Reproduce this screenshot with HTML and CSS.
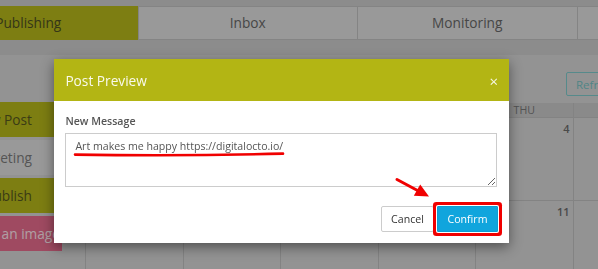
FILE: index.html
```html
<!DOCTYPE html>
<html lang="en">
<head>
<meta charset="utf-8">
<title>Publishing</title>
<link rel="stylesheet" href="styles.css">
</head>
<body>
  <div class="topstrip"></div>
  <nav class="tabs">
    <div class="tab active">Publishing</div>
    <div class="tab">Inbox</div>
    <div class="tab">Monitoring</div>
    <div class="tab">Reports</div>
  </nav>
  <main class="main">
    <aside class="sidebar">
      <div class="side-btn olive">New Post</div>
      <div class="side-btn gray">Retargeting</div>
      <div class="side-btn olive spaced">Publish</div>
      <div class="side-btn pink">Add an image</div>
    </aside>
    <section class="cal-wrap">
      <div class="toolbar"><button class="refresh">Refresh</button></div>
      <div class="calendar">
        <div class="head">SUN</div><div class="head">MON</div><div class="head">TUE</div><div class="head">WED</div><div class="head">THU</div><div class="head">FRI</div>
        <div class="day">31</div><div class="day">1</div><div class="day">2</div><div class="day">3</div><div class="day">4</div><div class="day">5</div>
        <div class="day">7</div><div class="day">8</div><div class="day">9</div><div class="day">10</div><div class="day">11</div><div class="day">12</div>
      </div>
    </section>
  </main>

  <div class="backdrop"></div>

  <div class="modal">
    <div class="modal-header">
      <span class="modal-title">Post Preview</span>
      <span class="close">&times;</span>
    </div>
    <div class="modal-body">
      <label class="label" for="msg">New Message</label>
      <textarea id="msg" class="msg">Art makes me happy https://digitalocto.io/</textarea>
    </div>
    <div class="modal-footer">
      <button class="btn cancel">Cancel</button>
      <button class="btn confirm">Confirm</button>
    </div>
  </div>

  <svg class="annot" width="598" height="269" viewBox="0 0 598 269">
    <path d="M75 154.6 Q180 156.4 283 153.6" fill="none" stroke="#f00000" stroke-width="2.6" stroke-linecap="round"/>
    <path d="M397 179.5 L418 190.8" fill="none" stroke="#f00000" stroke-width="3" stroke-linecap="round"/>
    <polygon points="429,196.6 413.8,195.8 420.2,184.6" fill="#f00000"/>
  </svg>
</body>
</html>
```
FILE: styles.css
```css
* { box-sizing: border-box; }

html, body {
  margin: 0;
  padding: 0;
  width: 598px;
  height: 269px;
  overflow: hidden;
}

body {
  background: #c9c9c9;
  font-family: "Open Sans", "Noto Sans", sans-serif;
  color: #555;
  position: relative;
}

.topstrip { height: 6px; }

.tabs {
  display: flex;
  height: 34px;
  margin-left: -82px;
  margin-bottom: 15px;
}

.tab {
  flex: 0 0 219.5px;
  height: 34px;
  line-height: 32px;
  text-align: center;
  font-size: 13.7px;
  color: #666;
  background: #dbdbdb;
  border-top: 1px solid #bdbdbd;
  border-bottom: 1px solid #bdbdbd;
  border-left: 1px solid #bdbdbd;
}

.tab.active {
  background: #b3b51a;
  border-color: #b3b51a;
  color: #4d4e22;
}

.main {
  display: flex;
  background: #d3d3d3;
  height: 214px;
}

.sidebar {
  flex: 0 0 85px;
  padding-top: 47px;
}

.side-btn {
  width: 124px;
  margin-left: -70px;
  height: 35px;
  line-height: 35px;
  text-align: right;
  padding-right: 22px;
  font-size: 13.7px;
  margin-bottom: 3px;
  white-space: nowrap;
  overflow: hidden;
}

.side-btn.olive { background: #b3b51a; color: #55561f; }
.side-btn.gray { background: #dcdcdc; color: #7a7a7a; }
.side-btn.spaced { margin-top: 2px; margin-bottom: 3px; }
.side-btn.pink {
  width: 132px;
  padding-right: 2px;
  background: #e46a8c;
  color: #fbe4ea;
}

.cal-wrap {
  flex: 1;
  min-width: 0;
}

.toolbar {
  height: 48px;
  padding-top: 17px;
  display: flex;
  justify-content: flex-end;
}

.refresh {
  width: 72px;
  height: 24px;
  margin-right: -40px;
  padding: 0 0 0 9px;
  text-align: left;
  background: transparent;
  border: 1px solid #7cc6c8;
  border-radius: 2px;
  color: #74bfc1;
  font-family: "Open Sans", sans-serif;
  font-size: 11.5px;
}

.calendar {
  display: grid;
  grid-template-columns: repeat(6, 97.5px);
  grid-template-rows: 15px 83px 83px;
}

.head {
  background: #c6c6c6;
  border-left: 1px solid #bcbcbc;
  border-bottom: 1px solid #bcbcbc;
  font-size: 10.6px;
  line-height: 14px;
  text-align: center;
  color: #777;
}

.day {
  border-left: 1px solid #bcbcbc;
  border-bottom: 1px solid #bcbcbc;
  text-align: right;
  padding: 3px 3px 0 0;
  font-size: 11px;
  font-weight: 600;
  color: #6a6a6a;
}

.backdrop {
  position: fixed;
  inset: 0;
  background: rgba(0, 0, 0, 0.3);
}

.modal {
  position: absolute;
  left: 54px;
  top: 59px;
  width: 455px;
  height: 184px;
  background: #fff;
  box-shadow: 0 4px 12px rgba(0, 0, 0, 0.45);
}

.modal-header {
  height: 42px;
  background: #b3b514;
  display: flex;
  align-items: center;
  justify-content: space-between;
  padding: 0 11px 0 11.4px;
}

.modal-title {
  font-size: 13.7px;
  color: rgba(255, 255, 255, 0.92);
  padding-top: 1px;
}

.close {
  font-size: 15px;
  font-weight: 400;
  color: rgba(255, 255, 255, 0.88);
  line-height: 16px;
  padding-top: 1px;
}

.modal-body {
  padding: 13px 11.4px 8px;
}

.label {
  display: block;
  font-size: 10.6px;
  line-height: 15px;
  font-weight: 600;
  color: #555;
  margin-bottom: 4px;
}

.msg {
  display: block;
  width: 432px;
  height: 54px;
  margin: 0;
  padding: 4.5px 9px;
  border: 1px solid #ccc;
  border-radius: 0;
  font-family: "Open Sans", sans-serif;
  font-size: 10.6px;
  line-height: 15px;
  color: #555;
  resize: vertical;
}

.modal-footer {
  display: flex;
  justify-content: flex-end;
  gap: 3px;
  padding: 11px 11px 11px;
}

.btn {
  height: 26px;
  font-family: "Open Sans", sans-serif;
  font-size: 10.6px;
  border-radius: 2px;
  cursor: pointer;
}

.cancel {
  width: 53px;
  padding: 0;
  background: #fff;
  border: 1px solid #ccc;
  color: #333;
}

.confirm {
  width: 61px;
  padding: 0;
  background: #10a5dd;
  border: 1px solid #0e9cd2;
  color: #fff;
  box-shadow: 0 0 0 1px #fff, 0 0 0 4px #f00000;
  border-radius: 1px;
}

.annot {
  position: absolute;
  left: 0;
  top: 0;
  pointer-events: none;
}
```
